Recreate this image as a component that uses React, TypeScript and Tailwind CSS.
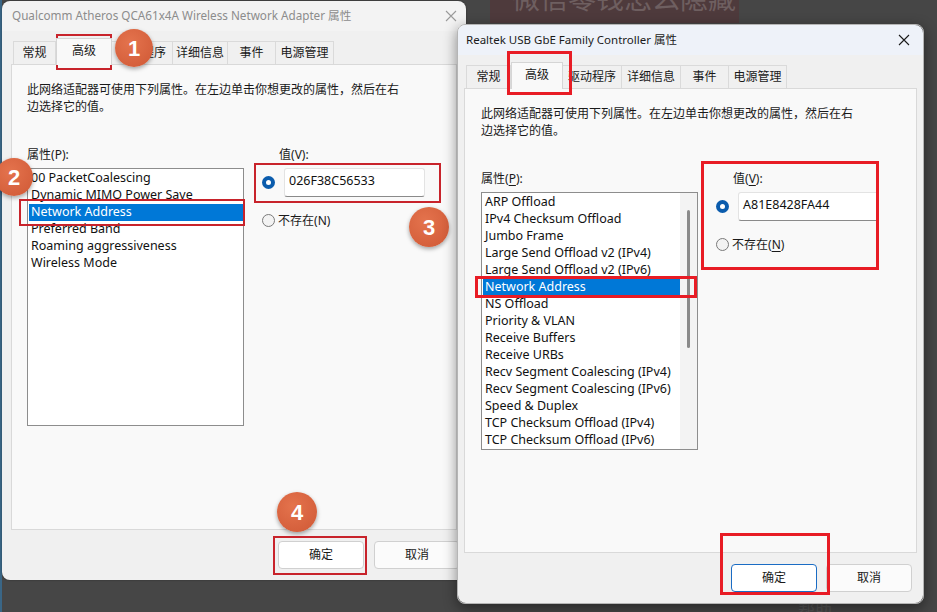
import React from "react";

type DialogProps = {
  title: string;
  active: boolean;
  tabWidths: number[];
  items: string[];
  selIndex: number;
  value: string;
  scrollbar: boolean;
  underline: boolean;
  inset: number;
  padL: number;
  closeRight: number;
  btnGap: number;
  btnRight: number;
  defaultBtn: boolean;
  className: string;
};

const TABS = ["常规", "高级", "驱动程序", "详细信息", "事件", "电源管理"];

function Radio({ on }: { on: boolean }) {
  if (on)
    return (
      <span className="flex h-[13px] w-[13px] shrink-0 items-center justify-center rounded-full bg-[#0b5cad]">
        <span className="h-[5px] w-[5px] rounded-full bg-white" />
      </span>
    );
  return <span className="h-[13px] w-[13px] shrink-0 rounded-full border border-[#7a7a7a] bg-[#f3f3f3]" />;
}

function Acc({ label, k, u }: { label: string; k: string; u: boolean }) {
  return (
    <span>
      {label}(
      <span className={u ? "underline underline-offset-2" : ""}>{k}</span>)
    </span>
  );
}

function Dialog(p: DialogProps) {
  return (
    <div className={p.className}>
      <div
        className={
          "flex h-[30px] shrink-0 items-center justify-between rounded-t-[8px] pl-[8px] " +
          (p.active ? "bg-[#eef2f9] text-[#1a1a1a]" : "bg-[#f3f3f3] text-[#8c8c8c]")
        }
        style={{ paddingRight: p.closeRight }}
      >
        <span className={p.active ? "text-[11.5px]" : "pl-[2px] text-[11.7px]"}>{p.title}</span>
        <svg width="12" height="12" viewBox="0 0 12 12" className={p.active ? "text-[#1a1a1a]" : "text-[#9a9a9a]"}>
          <path d="M1 1L11 11M11 1L1 11" stroke="currentColor" strokeWidth="1.1" />
        </svg>
      </div>
      <div className="flex flex-1 flex-col bg-[#f0f0f0]" style={{ paddingLeft: p.inset, paddingRight: p.inset }}>
        <div className="flex h-[33px] items-end pl-[2px]">
          {TABS.map((t, i) =>
            i === 1 ? (
              <div
                key={t}
                className="relative z-10 -mb-px flex h-[27px] items-start justify-center border border-b-0 border-[#d5d5d5] bg-[#f9f9f9] pt-[3px]"
                style={{ width: p.tabWidths[i] }}
              >
                {t}
              </div>
            ) : (
              <div
                key={t}
                className="flex h-[23px] items-center justify-center border border-b-0 border-l-0 border-[#dadada] bg-[#f0f0f0] first:border-l"
                style={{ width: p.tabWidths[i] }}
              >
                {t}
              </div>
            )
          )}
        </div>
        <div className="flex-1 border border-[#d9d9d9] bg-[#f9f9f9] pt-[16px]" style={{ paddingLeft: p.padL }}>
          <div className="leading-[17px]">
            此网络适配器可使用下列属性。在左边单击你想更改的属性，然后在右
            <br />
            边选择它的值。
          </div>
          <div className="mt-[31px] flex">
            <div className="flex w-[217px] flex-col">
              <div className="h-[17px] leading-[17px]">
                <Acc label="属性" k="P" u={p.underline} />:
              </div>
              <div className="mt-[5px] flex h-[258px] border border-[#8d8d8d] bg-white">
                <div className="flex flex-1 flex-col pl-[1px] pt-[1px] text-[12.5px]">
                  {p.items.map((it, i) => (
                    <div
                      key={it}
                      className={
                        "h-[17px] whitespace-nowrap pl-[2px] leading-[15px] " +
                        (i === p.selIndex ? "bg-[#0078d7] text-white" : "text-[#111]")
                      }
                    >
                      {it}
                    </div>
                  ))}
                </div>
                {p.scrollbar && (
                  <div className="flex w-[17px] shrink-0 justify-center bg-[#f3f3f3] pt-[17px]">
                    <div className="h-[138px] w-[3px] rounded-full bg-[#8a8a8a]" />
                  </div>
                )}
              </div>
            </div>
            <div className="flex flex-col">
              <div className="h-[17px] pl-[35px] leading-[17px]">
                <Acc label="值" k="V" u={p.underline} />:
              </div>
              <div className="mt-[5px] flex items-center pl-[18px]">
                <Radio on />
                <div className="ml-[9px] flex h-[29px] w-[141px] items-center rounded-[3px] border border-[#e3e3e3] border-b-[#8a8a8a] bg-white pb-[2px] pl-[4px] text-[12.5px] text-[#111]">
                  {p.value}
                </div>
              </div>
              <div className="mt-[15px] flex items-center gap-[3px] pl-[18px] leading-[17px]">
                <Radio on={false} />
                <Acc label="不存在" k="N" u={p.underline} />
              </div>
            </div>
          </div>
        </div>
      </div>
      <div
        className="flex h-[50px] shrink-0 items-center justify-end rounded-b-[8px] bg-[#f0f0f0]"
        style={{ paddingRight: p.btnRight, gap: p.btnGap }}
      >
        <div
          className={
            "flex h-[28px] w-[86px] items-center justify-center rounded-[4px] bg-white " +
            (p.defaultBtn ? "border border-[#1a6cc4]" : "border border-[#d0d0d0]")
          }
        >
          确定
        </div>
        <div className="flex h-[28px] w-[86px] items-center justify-center rounded-[4px] border border-[#d0d0d0] bg-[#fbfbfb]">
          取消
        </div>
      </div>
    </div>
  );
}

function Badge({ n, x, y, d }: { n: string; x: number; y: number; d: number }) {
  return (
    <div
      className="absolute flex items-center justify-center rounded-full bg-[radial-gradient(circle_at_40%_35%,#e4734d,#cf5835)] font-['Liberation_Sans',sans-serif] text-[22px] font-bold text-white shadow-[0_2px_4px_rgba(0,0,0,0.35)]"
      style={{ left: x - d / 2, top: y - d / 2, width: d, height: d }}
    >
      {n}
    </div>
  );
}

function RedBox({ x, y, w, h, t, c }: { x: number; y: number; w: number; h: number; t: number; c: string }) {
  return (
    <div
      className="pointer-events-none absolute"
      style={{ left: x, top: y, width: w, height: h, borderWidth: t, borderStyle: "solid", borderColor: c }}
    />
  );
}

export default function App() {
  const leftItems = [
    "00 PacketCoalescing",
    "Dynamic MIMO Power Save",
    "Network Address",
    "Preferred Band",
    "Roaming aggressiveness",
    "Wireless Mode",
  ];
  const rightItems = [
    "ARP Offload",
    "IPv4 Checksum Offload",
    "Jumbo Frame",
    "Large Send Offload v2 (IPv4)",
    "Large Send Offload v2 (IPv6)",
    "Network Address",
    "NS Offload",
    "Priority & VLAN",
    "Receive Buffers",
    "Receive URBs",
    "Recv Segment Coalescing (IPv4)",
    "Recv Segment Coalescing (IPv6)",
    "Speed & Duplex",
    "TCP Checksum Offload (IPv4)",
    "TCP Checksum Offload (IPv6)",
  ];
  const dark = "#c8232b";
  const bright = "#e81c25";
  return (
    <div className="relative h-[612px] w-[937px] overflow-hidden bg-[#464646] font-['Noto_Sans','Noto_Sans_CJK_SC',sans-serif] text-[12px] text-[#1a1a1a]">
      <div className="absolute left-0 top-0 h-full w-[2px] bg-[#3a6686]" />
      <div className="absolute left-[490px] top-0 h-[23px] w-[249px] overflow-hidden bg-[#4e3a3c]">
        <div className="absolute left-[22px] top-[-20px] whitespace-nowrap text-[28px] leading-[36px] text-[#6e5f60]">
          微信零钱怎么隐藏
        </div>
      </div>
      <div className="absolute left-[798px] top-[598px] text-[17px] text-[#555]">帮助</div>

      <Dialog
        className="absolute left-[2px] top-[1px] flex h-[579px] w-[464px] flex-col rounded-[8px] shadow-[0_0_2px_rgba(0,0,0,0.4)]"
        title="Qualcomm Atheros QCA61x4A Wireless Network Adapter 属性"
        active={false}
        tabWidths={[43, 56, 61, 55, 48, 58]}
        items={leftItems}
        selIndex={2}
        value="026F38C56533"
        scrollbar={false}
        underline={false}
        inset={9}
        padL={15}
        closeRight={9}
        btnGap={10}
        btnRight={6}
        defaultBtn={false}
      />
      <Badge n="1" x={134} y={48} d={38} />
      <Badge n="2" x={14} y={177} d={38} />
      <Badge n="3" x={429} y={227} d={40} />
      <Badge n="4" x={297} y={512} d={40} />
      <RedBox x={56} y={34} w={56} h={36} t={2} c={dark} />
      <RedBox x={19} y={199} w={226} h={27} t={2} c={dark} />
      <RedBox x={254} y={163} w={187} h={40} t={2} c={dark} />
      <RedBox x={273} y={536} w={94} h={39} t={2} c={dark} />

      <Dialog
        className="absolute left-[457px] top-[24px] flex h-[580px] w-[467px] flex-col rounded-[8px] border border-[#b5b5b5] shadow-[0_4px_14px_rgba(0,0,0,0.45)]"
        title="Realtek USB GbE Family Controller 属性"
        active
        tabWidths={[45, 52, 59, 59, 48, 58]}
        items={rightItems}
        selIndex={5}
        value="A81E8428FA44"
        scrollbar
        underline
        inset={6}
        padL={16}
        closeRight={13}
        btnGap={9}
        btnRight={11}
        defaultBtn
      />
      <RedBox x={507} y={51} w={65} h={44} t={3} c={bright} />
      <RedBox x={475} y={276} w={222} h={22} t={3} c={bright} />
      <RedBox x={701} y={161} w={178} h={109} t={3} c={bright} />
      <RedBox x={720} y={533} w={110} h={62} t={3} c={bright} />
    </div>
  );
}
